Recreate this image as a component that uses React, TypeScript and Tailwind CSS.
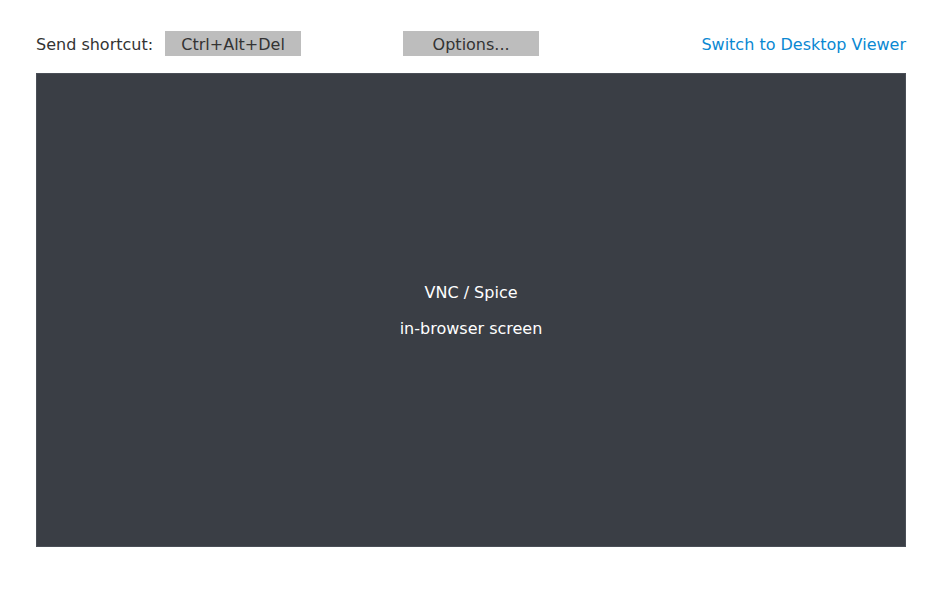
export default function App() {
  return (
    <div
      className="w-[945px] h-[594px] bg-white"
      style={{ fontFamily: '"DejaVu Sans", sans-serif' }}
    >
      <div className="w-[870px] ml-[36px] pt-[31px]">
        <div className="flex items-center h-[25px] text-[16px] text-[#333]">
          <span className="pt-[2px]">Send shortcut:</span>
          <button className="ml-[12px] w-[136px] h-[25px] pt-[2px] bg-[#bdbdbd] text-[#333] text-[16px]">
            Ctrl+Alt+Del
          </button>
          <button className="ml-[102px] w-[136px] h-[25px] pt-[2px] bg-[#bdbdbd] text-[#333] text-[16px]">
            Options...
          </button>
          <a className="ml-auto pt-[2px] text-[#0a88d2] cursor-pointer">Switch to Desktop Viewer</a>
        </div>
        <div className="mt-[17px] h-[474px] bg-[#3a3e45] border border-[#4a4f57] flex flex-col items-center justify-center gap-[12px] pt-[2px] text-white text-[16px]">
          <span>VNC / Spice</span>
          <span>in-browser screen</span>
        </div>
      </div>
    </div>
  );
}
